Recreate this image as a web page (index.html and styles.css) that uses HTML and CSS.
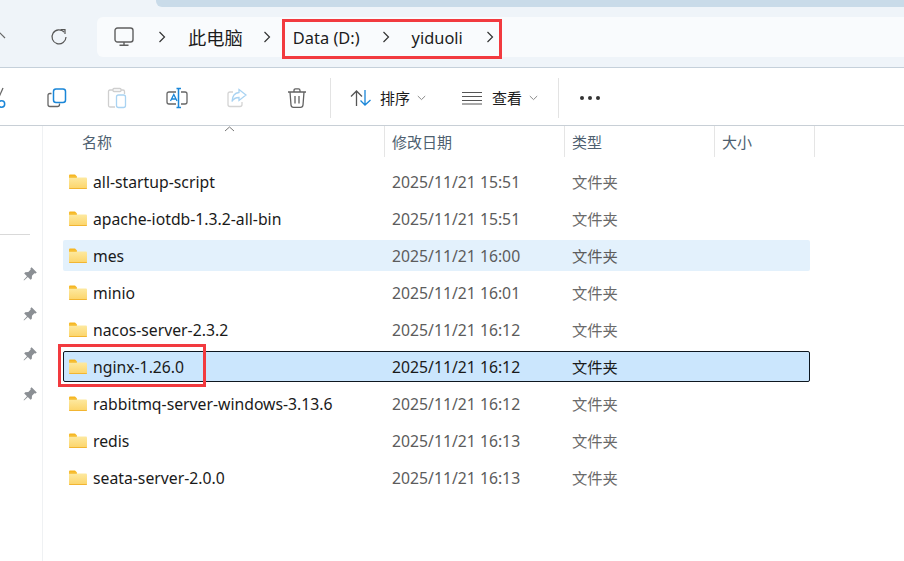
FILE: index.html
```html
<!DOCTYPE html>
<html lang="zh-CN">
<head>
<meta charset="utf-8">
<title>Data (D:) - yiduoli</title>
<link rel="stylesheet" href="styles.css">
</head>
<body>
<svg class="defs" width="0" height="0" aria-hidden="true">
  <defs>
    <linearGradient id="fg" x1="0" y1="0" x2="0" y2="1"><stop offset="0" stop-color="#fde9a0"/><stop offset="1" stop-color="#fcd468"/></linearGradient>
    <symbol id="folder" viewBox="0 0 18 15">
      <path d="M0 1.5Q0 .5 1 .5H6L8 2.5V6H0Z" fill="#f6b622"/>
      <path d="M0 3.5H17Q18 3.5 18 4.5V14Q18 15 17 15H1Q0 15 0 14Z" fill="url(#fg)"/>
      <path d="M0 14H18V14.2Q18 15 17 15H1Q0 15 0 14.2Z" fill="#f2b531"/>
      <path d="M0 2.6H8.2L7 3.8H0Z" fill="#f6c544"/>
    </symbol>
    <symbol id="pin" viewBox="0 0 16 16">
      <path d="M9.6 1.2 14.8 6.4 13.6 7.6 12.4 7.3 10 9.7 9.8 12.8 8.6 13.8 5.8 11 2 14.4 1.600 14 5 10.200 2.200 7.400 3.200 6.200 6.300 6 8.700 3.600 8.400 2.400Z" fill="#8b8f94"/>
    </symbol>
    <symbol id="chev" viewBox="0 0 8 12">
      <path d="M1.5 1 6.5 6 1.5 11" fill="none" stroke="#333" stroke-width="1.2"/>
    </symbol>
    <symbol id="caret" viewBox="0 0 9 6">
      <path d="M.8 1 4.5 4.6 8.2 1" fill="none" stroke="#8a8a8a" stroke-width="1"/>
    </symbol>
  </defs>
</svg>

<div class="window">
  <header class="titlebar">
    <div class="tabstrip"></div>
    <div class="navrow">
      <svg class="back" width="10" height="14" viewBox="0 0 10 14"><path d="M-3 4 5 12" fill="none" stroke="#666" stroke-width="1.2"/></svg>
      <svg class="refresh" width="18" height="18" viewBox="0 0 18 18"><path d="M14.2 4.2A7 7 0 1 0 16 9" fill="none" stroke="#555" stroke-width="1.2"/><path d="M10.5 1.6H15V6" fill="none" stroke="#555" stroke-width="1.2"/></svg>
      <nav class="address">
        <svg class="pc" width="20" height="20" viewBox="0 0 20 20"><rect x="1" y="1" width="18" height="14" rx="2.5" fill="none" stroke="#5f5f5f" stroke-width="1.4"/><path d="M10 15v3M5.5 18.3h9" stroke="#5f5f5f" stroke-width="1.4" fill="none"/></svg>
        <svg class="crumb-chev c1" width="8" height="12"><use href="#chev"/></svg>
        <span class="crumb zh">此电脑</span>
        <svg class="crumb-chev c2" width="8" height="12"><use href="#chev"/></svg>
        <span class="crumb">Data (D:)</span>
        <svg class="crumb-chev c3" width="8" height="12"><use href="#chev"/></svg>
        <span class="crumb">yiduoli</span>
        <svg class="crumb-chev c4" width="8" height="12"><use href="#chev"/></svg>
      </nav>
    </div>
  </header>

  <div class="toolbar">
    <span class="tool first"><svg width="22" height="22" viewBox="0 0 22 22"><path d="M17 1 13 10" stroke="#666" stroke-width="1.3" fill="none"/><circle cx="15.500" cy="17" r="3.200" fill="none" stroke="#1a86d8" stroke-width="1.5"/></svg></span>
    <span class="tool"><svg width="20" height="20" viewBox="0 0 20 20"><path d="M4.5 5.5H3Q1 5.500 1 7.500V16.500Q1 18.500 3 18.500H10.500Q12.500 18.500 12.500 16.500V15.500" fill="none" stroke="#666" stroke-width="1.3"/><rect x="6.500" y="1" width="12" height="13.500" rx="2.500" fill="none" stroke="#1a86d8" stroke-width="1.5"/></svg></span>
    <span class="tool"><svg width="20" height="22" viewBox="0 0 20 22"><path d="M6 3H3Q1.500 3 1.500 4.500V18.500Q1.500 20 3 20H8M14 3H16Q17.500 3 17.500 4.500V7" fill="none" stroke="#cfcfcf" stroke-width="1.300"/><rect x="6" y="1.500" width="8" height="3" rx="1" fill="none" stroke="#cfcfcf" stroke-width="1.300"/><rect x="9.500" y="8" width="9" height="12.500" rx="2" fill="none" stroke="#a9d3f2" stroke-width="1.300"/></svg></span>
    <span class="tool"><svg width="22" height="22" viewBox="0 0 22 22"><path d="M10 5H3Q1 5 1 7V15Q1 17 3 17H10M15 5H19Q21 5 21 7V15Q21 17 19 17H15" fill="none" stroke="#666" stroke-width="1.300"/><path d="M4.500 14 7.800 7.500 11 14M5.500 12H10" fill="none" stroke="#1a86d8" stroke-width="1.300"/><path d="M12.500 1.500V20.500M10.500 1.500H15M10.500 20.500H15" stroke="#1a86d8" stroke-width="1.500" fill="none"/></svg></span>
    <span class="tool"><svg width="20" height="20" viewBox="0 0 20 20"><path d="M6 4H3Q1 4 1 6V16.500Q1 18.500 3 18.500H13Q15 18.500 15 16.500V14" fill="none" stroke="#d4d4d4" stroke-width="1.300"/><path d="M12 1.500 19 7 12 12.500V9.500Q7 9.500 5 13.500 5.500 5 12 4.500Z" fill="none" stroke="#a9d3f2" stroke-width="1.300"/></svg></span>
    <span class="tool"><svg width="20" height="22" viewBox="0 0 20 22"><path d="M1 5H19M7 5V3.500Q7 1.800 8.500 1.800H11.500Q13 1.800 13 3.500V5M3 5 4 18Q4.200 20.300 6.500 20.300H13.500Q15.800 20.300 16 18L17 5M8 9V16.500M12 9V16.500" fill="none" stroke="#616161" stroke-width="1.300"/></svg></span>
    <span class="sep sep-a"></span>
    <span class="cmd cmd-sort">
      <svg width="22" height="18" viewBox="0 0 22 18"><path d="M6.500 17V2M1 7.500 6.500 2 12 7.500" fill="none" stroke="#555" stroke-width="1.300"/><path d="M15 1V16M10.500 11.500 15 16 20.500 11" fill="none" stroke="#1a86d8" stroke-width="1.300"/></svg>
      <span class="cmd-label">排序</span>
      <svg class="cmd-caret" width="9" height="6"><use href="#caret"/></svg>
    </span>
    <span class="cmd cmd-view">
      <svg width="20" height="14" viewBox="0 0 20 14"><path d="M0 1.500H20M0 5.500H20M0 9.500H20M0 13H20" stroke="#555" stroke-width="1.100" fill="none"/></svg>
      <span class="cmd-label lbl-view">查看</span>
      <svg class="cmd-caret" width="9" height="6"><use href="#caret"/></svg>
    </span>
    <span class="sep sep-b"></span>
    <span class="more"><i></i><i></i><i></i></span>
  </div>

  <div class="content">
    <aside class="sidebar">
      <div class="side-rule"></div>
      <ul class="pins">
        <li><svg width="16" height="16"><use href="#pin"/></svg></li>
        <li><svg width="16" height="16"><use href="#pin"/></svg></li>
        <li><svg width="16" height="16"><use href="#pin"/></svg></li>
        <li><svg width="16" height="16"><use href="#pin"/></svg></li>
      </ul>
    </aside>
    <main class="files">
      <div class="head">
        <div class="hcell hname">名称<svg class="sort-up" width="11" height="6" viewBox="0 0 11 6"><path d="M1 5 5.500 1 10 5" fill="none" stroke="#777" stroke-width="1"/></svg></div>
        <div class="hcell hdate">修改日期</div>
        <div class="hcell htype">类型</div>
        <div class="hcell hsize">大小</div>
      </div>
      <div class="rows">
        <div class="row"><svg class="folder" width="18" height="15"><use href="#folder"/></svg><span class="name">all-startup-script</span><span class="date">2025/11/21 15:51</span><span class="type">文件夹</span></div>
        <div class="row"><svg class="folder" width="18" height="15"><use href="#folder"/></svg><span class="name">apache-iotdb-1.3.2-all-bin</span><span class="date">2025/11/21 15:51</span><span class="type">文件夹</span></div>
        <div class="row hover"><svg class="folder" width="18" height="15"><use href="#folder"/></svg><span class="name">mes</span><span class="date">2025/11/21 16:00</span><span class="type">文件夹</span></div>
        <div class="row"><svg class="folder" width="18" height="15"><use href="#folder"/></svg><span class="name">minio</span><span class="date">2025/11/21 16:01</span><span class="type">文件夹</span></div>
        <div class="row"><svg class="folder" width="18" height="15"><use href="#folder"/></svg><span class="name">nacos-server-2.3.2</span><span class="date">2025/11/21 16:12</span><span class="type">文件夹</span></div>
        <div class="row selected"><svg class="folder" width="18" height="15"><use href="#folder"/></svg><span class="name">nginx-1.26.0</span><span class="date">2025/11/21 16:12</span><span class="type">文件夹</span></div>
        <div class="row"><svg class="folder" width="18" height="15"><use href="#folder"/></svg><span class="name">rabbitmq-server-windows-3.13.6</span><span class="date">2025/11/21 16:12</span><span class="type">文件夹</span></div>
        <div class="row"><svg class="folder" width="18" height="15"><use href="#folder"/></svg><span class="name">redis</span><span class="date">2025/11/21 16:13</span><span class="type">文件夹</span></div>
        <div class="row"><svg class="folder" width="18" height="15"><use href="#folder"/></svg><span class="name">seata-server-2.0.0</span><span class="date">2025/11/21 16:13</span><span class="type">文件夹</span></div>
      </div>
    </main>
  </div>

  <div class="mark mark-path"></div>
  <div class="mark mark-row"></div>
</div>
</body>
</html>
```

FILE: styles.css
```css
* { box-sizing: border-box; }
html, body { margin: 0; padding: 0; background: #fff; }
body {
  width: 904px;
  height: 561px;
  overflow: hidden;
  font-family: "Noto Sans", "Noto Sans CJK SC", sans-serif;
  color: #1c1c1c;
}
.defs { position: absolute; }
.window { position: relative; width: 904px; height: 561px; overflow: hidden; }

.titlebar { height: 68px; background: #eff4f9; border-bottom: 1px solid #c5d0da; }
.tabstrip { height: 7px; margin-left: 156px; background: #c9dbe9; border-bottom-left-radius: 6px; }
.navrow { display: flex; align-items: center; padding-top: 10px; height: 50px; }
.back { flex: none; margin-top: -8px; }
.refresh { flex: none; margin-left: 40px; }
.address {
  display: flex;
  align-items: center;
  flex: 1;
  height: 40px;
  margin-left: 29px;
  background: #f9fbfd;
  border-radius: 6px 0 0 6px;
  font-size: 16.400px;
  color: #1c1c1c;
}
.pc { flex: none; margin-left: 17px; }
.crumb-chev { flex: none; }
.c1 { margin-left: 24px; }
.c2 { margin-left: 20px; }
.c3 { margin-left: 22px; }
.c4 { margin-left: 23px; }
.crumb { margin-left: 22px; white-space: nowrap; }
.crumb.zh { font-size: 18.300px; }

.toolbar {
  display: flex;
  align-items: center;
  height: 58px;
  padding-top: 2px;
  background: #fff;
  border-bottom: 1px solid #c8cfd6;
}
.tool { flex: none; display: flex; justify-content: center; align-items: center; width: 60px; }
.tool.first { margin-left: -33px; }
.sep { flex: none; width: 1px; height: 40px; background: #e3e3e3; }
.sep-a { margin-left: 3px; }
.sep-b { margin-left: 20px; }
.cmd { flex: none; display: flex; align-items: center; }
.cmd-sort { margin-left: 19px; }
.cmd-view { margin-left: 36px; }
.cmd-label { margin-left: 8px; font-size: 15px; line-height: 20px; }
.lbl-view { margin-left: 10px; }
.cmd-caret { margin-left: 7px; }
.more { display: flex; gap: 4px; margin-left: 21px; }
.more i { display: block; width: 4px; height: 4px; border-radius: 50%; background: #333; }

.content { display: flex; height: 435px; }
.sidebar { flex: none; width: 43px; border-right: 1px solid #eff1f3; padding-top: 108px; }
.side-rule { width: 30px; height: 1px; background: #d9d9d9; }
.pins { list-style: none; margin: 0; padding: 31px 0 0 22px; display: flex; flex-direction: column; gap: 24px; }
.pins li { display: block; height: 16px; }
.pins svg { display: block; }

.files { flex: 1; min-width: 0; }
.head { display: flex; height: 31px; color: #4e5f70; font-size: 15px; }
.hcell { display: flex; align-items: center; padding-left: 7px; border-right: 1px solid #e5e5e5; position: relative; }
.hname { width: 342px; padding-left: 39px; }
.hdate { width: 180px; }
.htype { width: 150px; }
.hsize { width: 100px; }
.sort-up { position: absolute; left: 181px; top: 0; }

.rows { display: flex; flex-direction: column; gap: 6px; padding: 9px 0 0 20px; }
.row {
  display: flex;
  align-items: center;
  width: 747px;
  height: 31px;
  font-size: 15.750px;
  border: 1px solid transparent;
  border-radius: 2px;
}
.row.hover { background: #e3f1fc; }
.row.selected { background: #cbe6fd; border-color: #0e1720; }
.folder { flex: none; margin-left: 5px; margin-top: -1px; }
.name { width: 299px; margin-left: 6px; white-space: nowrap; color: #1a1a1a; }
.date { width: 180px; color: #5c5c5c; white-space: nowrap; }
.type { font-size: 15.300px; color: #6a6a6a; margin-top: -2px; }
.selected .date, .selected .type { color: #1a1a1a; }
.hover .date, .hover .type { color: #5c5c5c; }

.mark { position: absolute; border: 3px solid #f23a3f; pointer-events: none; }
.mark-path { left: 282px; top: 19px; width: 220px; height: 40px; }
.mark-row { left: 58px; top: 344px; width: 148px; height: 43px; }
```
